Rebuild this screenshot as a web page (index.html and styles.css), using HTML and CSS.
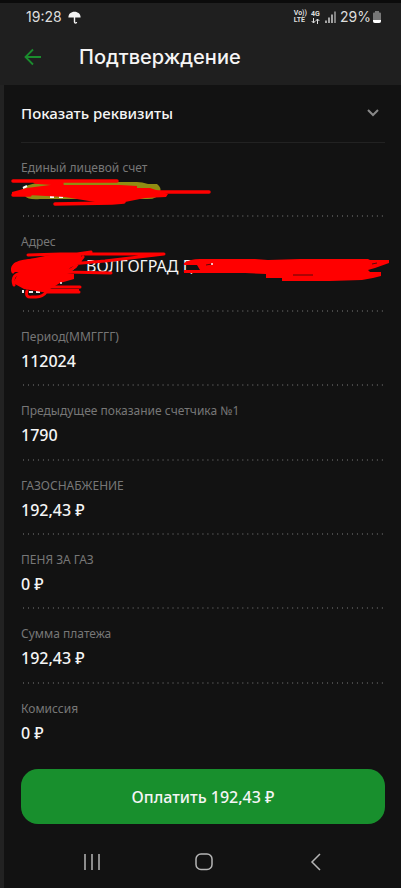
FILE: index.html
```html
<!DOCTYPE html>
<html lang="ru">
<head>
<meta charset="utf-8">
<meta name="viewport" content="width=device-width, initial-scale=1">
<title>Подтверждение</title>
<link rel="stylesheet" href="styles.css">
</head>
<body>
<div class="screen">
  <header class="header">
    <div class="status">
      <span>19:28</span>
      <svg class="umbrella" width="13" height="13" viewBox="0 0 13 13" aria-hidden="true"><path d="M.4 6.500C.4 3 3 .8 6.500.8s6.100 2.200 6.100 5.700z" fill="#f2f2f2"/><path d="M6.500 6v5c0 1.500 2 1.500 2 0" fill="none" stroke="#f2f2f2" stroke-width="1.400"/></svg>
      <span class="tech">Vo))<br>LTE</span>
      <span class="tech tech-data">4G<svg width="9" height="6" viewBox="0 0 9 6" aria-hidden="true"><path d="M2.500 0v5M.7 3l1.800 2 1.800-2M6.500 6V1M4.700 3l1.800-2 1.800 2" fill="none" stroke="#ddd"/></svg></span>
      <svg class="signal" width="11" height="12" viewBox="0 0 11 12" aria-hidden="true"><path d="M1 9.500V12M4 6.500V12M7 3.500V12" stroke="#ddd" stroke-width="1.400"/><path d="M10 .5V12" stroke="#aaa" stroke-width="1.400"/></svg>
      <span>29%</span>
      <svg class="battery" width="8" height="12" viewBox="0 0 8 12" aria-hidden="true"><path d="M2 1.500V0h4v1.500h1q1 0 1 1V10q0 2-2 2H2q-2 0-2-2V2.500q0-1 1-1z" fill="#777"/><path d="M0 9h8v1q0 2-2 2H2q-2 0-2-2z" fill="#fff"/></svg>
    </div>
    <div class="titlebar">
      <button class="back" type="button" aria-label="Назад"><svg width="18" height="18" viewBox="0 0 18 18" aria-hidden="true"><path d="M17 9H2M9 1.500L1.500 9 9 16.500" fill="none" stroke="#1b8c2e" stroke-width="1.800"/></svg></button>
      <h1>Подтверждение</h1>
    </div>
  </header>
  <main class="content">
    <button class="details" type="button"><span>Показать реквизиты</span><svg width="12" height="8" viewBox="0 0 12 8" aria-hidden="true"><path d="M1 1l5 5 5-5" fill="none" stroke="#888" stroke-width="2"/></svg></button>
    <dl class="rows">
      <div class="row">
        <dt>Единый лицевой счет</dt><dd></dd>
        <svg class="scribble" width="210" height="40" viewBox="11 175 210 40" aria-hidden="true">
          <path d="M22 190Q25 184 40 183L60 182H137Q142 182 148 184L157 184Q162 188 160 192Q158 200 145 199H40Q28 200 25 196z" fill="#918d12"/>
          <path d="M23 188l4-2M50 197h4M59 197h4" stroke="#fff" stroke-width="2"/>
          <path d="M27 188L50 185 120 185 137 186V188H150L168 194 166 197 145 198 125 202 95 202 65 197 28 195 12 195 12 192z" fill="#f00"/>
          <path d="M13 181H117M35 182L62 184M13 195L30 195M55 204L112 203L124 202M150 192H209" fill="none" stroke="#f00" stroke-width="3.500" stroke-linecap="round" stroke-linejoin="round"/>
        </svg>
      </div>
      <div class="row row-tall">
        <dt>Адрес</dt><dd class="address">ВОЛГОГРАД Г,</dd>
        <svg class="scribble" width="384" height="50" viewBox="11 248 384 50" aria-hidden="true">
          <path d="M70 270l6-5M23 289v3M29 291h4M36 291h4" stroke="#eee" stroke-width="2"/>
          <path d="M14 262L30 258 60 252H82L80 262 70 267 67 272 74 273V278L60 282 50 288 79 288V292H48L24 288 13 282 19 271 12 271z" fill="#f00"/>
          <path d="M28 254L60 253H164L105 260 70 263 26 264M13 271Q9 260 35 259L91 251M83 256L75 266 67 271 111 272M14 284Q10 272 25 272M80 286H45M79 291H48M27 290Q25 297 32 296H36Q43 296 47 290" fill="none" stroke="#f00" stroke-width="3" stroke-linecap="round" stroke-linejoin="round"/>
          <circle cx="61" cy="282" r="1" fill="#fff"/>
          <path d="M184 262Q190 258 200 258H255L268 259 300 258H368L370 259H389V262L375 267 368 269 370 271H381V275L373 277 362 279 330 280H282V277H266V273L245 272H184V269H200L197 264H184z" fill="#f00"/>
          <path d="M206 264l6-1M372 263l5-1M293 274h20" stroke="#580909"/><circle cx="212" cy="263" r="1" fill="#fff"/>
        </svg>
      </div>
      <div class="row"><dt>Период(ММГГГГ)</dt><dd>112024</dd></div>
      <div class="row"><dt>Предыдущее показание счетчика №1</dt><dd>1790</dd></div>
      <div class="row"><dt>ГАЗОСНАБЖЕНИЕ</dt><dd>192,43 ₽</dd></div>
      <div class="row"><dt>ПЕНЯ ЗА ГАЗ</dt><dd>0 ₽</dd></div>
      <div class="row"><dt>Сумма платежа</dt><dd>192,43 ₽</dd></div>
      <div class="row"><dt>Комиссия</dt><dd>0 ₽</dd></div>
    </dl>
    <button class="pay" type="button">Оплатить 192,43 ₽</button>
  </main>
  <nav class="nav" aria-label="Система">
    <button type="button" aria-label="Недавние"><svg width="18" height="18" viewBox="0 0 18 18"><path d="M2 1v16M9 1v16M16 1v16" stroke="#b5b5b5" stroke-width="1.500"/></svg></button>
    <button type="button" aria-label="Домой"><svg width="18" height="18" viewBox="0 0 18 18"><rect x="1" y="1" width="16" height="15.500" rx="5" fill="none" stroke="#b5b5b5" stroke-width="1.500"/></svg></button>
    <button type="button" aria-label="Назад"><svg width="18" height="18" viewBox="0 0 18 18"><path d="M12 1L4 9l8 8" fill="none" stroke="#b5b5b5" stroke-width="1.500"/></svg></button>
  </nav>
</div>
</body>
</html>
```
FILE: styles.css
```css
* { box-sizing: border-box; }
body { margin: 0; background: #121212; color: #f5f5f5; font-family: "Noto Sans", "Open Sans", sans-serif; }
button { margin: 0; padding: 0; border: 0; background: none; color: inherit; font: inherit; cursor: pointer; }
svg { display: block; flex: none; }
.screen { display: flex; flex-direction: column; min-height: 100vh; border-top: 3px solid #0b0b0b; background: linear-gradient(to right, #222 4px, #121212 4px); }
.header { height: 82px; padding: 3px 20px 0 26px; background: #1f1f1f; }
.status { display: flex; align-items: center; height: 22px; color: #ddd; font: 14px/22px Inter, sans-serif; }
.umbrella { margin-left: 6px; }
.tech { margin-left: auto; font: 700 7px/7px Roboto, sans-serif; }
.tech-data { margin-left: 4px; }
.signal { margin: 0 4px 0 5px; }
.battery { margin-left: 2px; }
.titlebar { display: flex; align-items: center; height: 58px; }
.back { width: 53px; height: 40px; margin-left: -2px; }
h1 { margin: 0 0 0 2px; font: 500 20px/28px Inter, sans-serif; }
.content { display: flex; flex: 1; flex-direction: column; padding: 0 16px 0 21px; }
.details { display: flex; align-items: center; justify-content: space-between; height: 58px; padding: 0 6px 2px 0; border-bottom: 1px solid #222; font-size: 15px; font-weight: 500; text-align: left; }
.rows { display: flex; flex: 1; flex-direction: column; margin: 0; }
.row { position: relative; flex: 1 0 74px; padding-top: 16px; background: radial-gradient(circle, #484848 1px, transparent 1px) left bottom / 5px 2px; background-repeat: round no-repeat; }
.row:last-child { background: none; }
.row-tall { flex-basis: 94px; }
dt { color: #777; font-size: 12px; line-height: 18px; }
dd { margin: 4px 0 0; font-size: 16px; font-weight: 500; line-height: 22px; }
.address { padding-left: 65px; font-weight: 400; }
.scribble { position: absolute; top: 32px; left: -10px; }
.pay { height: 55px; margin-top: 11px; border-radius: 17px; background: #188f2d; font-size: 16px; font-weight: 500; }
.nav { display: flex; justify-content: space-around; align-items: center; height: 64px; padding: 12px 28px 0 36px; }
.nav button { padding: 0 12px; }
```
